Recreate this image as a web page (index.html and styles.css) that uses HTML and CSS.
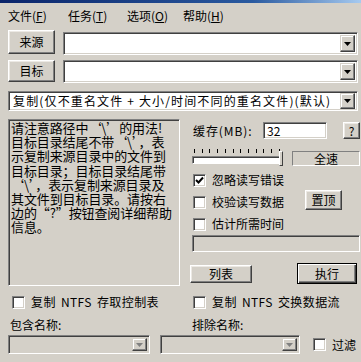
FILE: index.html
```html
<!DOCTYPE html>
<html lang="zh-CN">
<head>
<meta charset="utf-8">
<title>复制</title>
<link rel="stylesheet" href="styles.css">
</head>
<body>
<div class="titlebar"></div>
<nav class="menubar">
  <span class="menu m1">文件(<u>F</u>)</span>
  <span class="menu m2">任务(<u>T</u>)</span>
  <span class="menu m3">选项(<u>O</u>)</span>
  <span class="menu m4">帮助(<u>H</u>)</span>
</nav>
<main class="content">
  <div class="pathrow row-src">
    <button class="btn pathbtn btn-src">来源</button>
    <div class="combo sunken pathcombo combo-src">
      <span class="combo-text"></span>
      <span class="dd"><svg width="7" height="4" viewBox="0 0 7 4"><polygon points="0,0 7,0 3.5,4" fill="#000"/></svg></span>
    </div>
  </div>
  <div class="pathrow row-dst">
    <button class="btn pathbtn btn-dst">目标</button>
    <div class="combo sunken pathcombo combo-dst">
      <span class="combo-text"></span>
      <span class="dd"><svg width="7" height="4" viewBox="0 0 7 4"><polygon points="0,0 7,0 3.5,4" fill="#000"/></svg></span>
    </div>
  </div>
  <div class="combo sunken modecombo">
    <span class="combo-text mode-text">复制(仅不重名文件 + 大小/时间不同的重名文件)(默认)</span>
    <span class="dd"><svg width="7" height="4" viewBox="0 0 7 4"><polygon points="0,0 7,0 3.5,4" fill="#000"/></svg></span>
  </div>

  <div class="mainarea">
    <div class="note sunken">
      <div>请注意路径中‘\’的用法!</div>
      <div>目标目录结尾不带‘\’，表</div>
      <div>示复制来源目录中的文件到</div>
      <div>目标目录；目标目录结尾带</div>
      <div>‘\’，表示复制来源目录及</div>
      <div>其文件到目标目录。请按右</div>
      <div>边的“?”按钮查阅详细帮助</div>
      <div>信息。</div>
    </div>

    <div class="side">
      <div class="cacherow">
        <span class="cachelabel">缓存(MB):</span>
        <div class="field sunken">32</div>
        <button class="btn helpbtn">?</button>
      </div>
      <div class="speedrow">
        <div class="slider">
          <div class="ticks">
            <i></i><i></i><i></i><i></i><i></i><i></i><i></i><i></i><i></i><i></i><i></i><i></i>
          </div>
          <div class="track"><span class="thumb"></span></div>
        </div>
        <div class="static">全速</div>
      </div>
      <div class="opts">
        <div class="checks">
          <label class="chk"><span class="cb"><svg width="9" height="9" viewBox="0 0 9 9"><polyline points="1,4 3.5,6.5 8,1.5" fill="none" stroke="#000" stroke-width="2"/></svg></span><span>忽略读写错误</span></label>
          <label class="chk"><span class="cb"></span><span>校验读写数据</span></label>
          <label class="chk"><span class="cb"></span><span>估计所需时间</span></label>
        </div>
        <button class="btn topbtn">置顶</button>
      </div>
      <div class="progress sunken"></div>
      <div class="actions">
        <button class="btn listbtn">列表</button>
        <button class="btn runbtn">执行</button>
      </div>
    </div>
  </div>

  <div class="ntfsrow">
    <label class="chk ntfs-left"><span class="cb"></span><span class="ntfs-text">复制 NTFS 存取控制表</span></label>
    <label class="chk ntfs-right"><span class="cb"></span><span class="ntfs-text">复制 NTFS 交换数据流</span></label>
  </div>
  <div class="labelrow">
    <span class="lbl-inc">包含名称:</span>
    <span class="lbl-exc">排除名称:</span>
  </div>
  <div class="filterrow">
    <div class="combo sunken disabled fcombo inc">
      <span class="combo-text"></span>
      <span class="dd"><svg width="7" height="4" viewBox="0 0 7 4"><polygon points="0,0 7,0 3.5,4" fill="#808080"/></svg></span>
    </div>
    <div class="combo sunken disabled fcombo exc">
      <span class="combo-text"></span>
      <span class="dd"><svg width="7" height="4" viewBox="0 0 7 4"><polygon points="0,0 7,0 3.5,4" fill="#808080"/></svg></span>
    </div>
    <label class="chk filterchk"><span class="cb"></span><span>过滤</span></label>
  </div>
</main>
</body>
</html>
```

FILE: styles.css
```css
* { box-sizing: border-box; margin: 0; padding: 0; }
html, body { width: 361px; height: 362px; overflow: hidden; }
body {
  background: #d4d0c8;
  font-family: "Noto Sans CJK SC", "Noto Sans", sans-serif;
  font-size: 12px;
  line-height: 14px;
  color: #000;
}
u { text-decoration: underline; }

.titlebar {
  height: 3px;
  background: linear-gradient(90deg, #0a246a, #2a5aa0 70%, #a6caf0);
}

.menubar {
  display: flex;
  align-items: center;
  height: 22px;
  padding-left: 8px;
  padding-top: 3px;
}
.menu { white-space: nowrap; }
.m1 { width: 60px; }
.m2 { width: 59px; }
.m3 { width: 56px; }

.content { padding-left: 8px; }

/* 3D borders */
.sunken {
  border: 1px solid;
  border-color: #808080 #ffffff #ffffff #808080;
  box-shadow: inset 1px 1px #404040, inset -1px -1px #d4d0c8;
}
.btn {
  font: inherit;
  color: #000;
  background: #d4d0c8;
  border: 1px solid;
  border-color: #ffffff #404040 #404040 #ffffff;
  box-shadow: inset -1px -1px #808080, inset 1px 1px #ece9e4;
  display: flex;
  align-items: center;
  justify-content: center;
}

/* path rows */
.pathrow { display: flex; align-items: flex-start; }
.row-src { margin-top: 5px; }
.row-dst { margin-top: 5px; }
.pathbtn { width: 47px; }
.btn-src { height: 24px; }
.btn-dst { height: 22px; }
.pathcombo { margin-left: 8px; width: 295px; height: 23px; }
.combo-src { margin-top: 2px; }

.combo {
  display: flex;
  align-items: stretch;
  background: #fff;
  padding: 2px;
}
.combo-text { flex: 1; white-space: nowrap; overflow: hidden; display: flex; align-items: center; }
.dd {
  width: 15px;
  background: #d4d0c8;
  border: 1px solid;
  border-color: #d4d0c8 #404040 #404040 #d4d0c8;
  box-shadow: inset -1px -1px #808080, inset 1px 1px #ffffff;
  display: flex;
  align-items: center;
  justify-content: center;
}

.modecombo { margin-top: 8px; width: 350px; height: 20px; padding: 1px 2px 1px 1px; }
.mode-text { padding-left: 3px; letter-spacing: 1.15px; }

/* main area */
.mainarea { display: flex; margin-top: 8px; }
.note {
  width: 172px;
  height: 167px;
  background: #d4d0c8;
  padding: 1px 2px;
  font-size: 13px;
  line-height: 14.2px;
  letter-spacing: -0.1px;
  white-space: nowrap;
  overflow: hidden;
}

.side { width: 171px; margin-left: 10px; display: flex; flex-direction: column; }

.cacherow { display: flex; align-items: center; margin-top: 3px; height: 17px; }
.cachelabel { width: 70px; margin-left: 3px; letter-spacing: 0.9px; }
.field { width: 64px; height: 17px; background: #fff; padding: 1px 3px; line-height: 13px; }
.helpbtn { width: 17px; height: 17px; margin-left: 16px; }

.speedrow { display: flex; margin-top: 8px; height: 20px; }
.slider { width: 89px; margin-left: 2px; display: flex; flex-direction: column; }
.ticks { display: flex; justify-content: space-between; padding: 0 1px 0 2px; height: 5px; margin-top: 2px; }
.ticks i { width: 1px; height: 4px; background: #000; }
.track {
  position: relative;
  margin-top: 2px;
  height: 8px;
  background: #fff;
  border: 1px solid;
  border-color: #808080 #ffffff #ffffff #808080;
  box-shadow: inset 1px 1px #404040;
}
.thumb {
  position: absolute;
  right: -3px;
  top: -6px;
  width: 4px;
  height: 15px;
  background: #d4d0c8;
  border: 1px solid;
  border-color: #ffffff #404040 #404040 #ffffff;
}
.static {
  width: 68px;
  height: 15px;
  margin-left: 11px;
  margin-top: 4px;
  border: 1px solid;
  border-color: #808080 #ffffff #ffffff #808080;
  display: flex;
  align-items: center;
  justify-content: center;
}

.opts { display: flex; margin-top: 2px; }
.checks { width: 115px; display: flex; flex-direction: column; }
.chk { display: flex; align-items: center; height: 22px; white-space: nowrap; }
.checks .chk { padding-left: 3px; }
.cb {
  width: 13px;
  height: 13px;
  flex: none;
  background: #fff;
  border: 1px solid;
  border-color: #808080 #ffffff #ffffff #808080;
  box-shadow: inset 1px 1px #404040, inset -1px -1px #d4d0c8;
  display: flex;
  align-items: center;
  justify-content: center;
  margin-right: 6px;
}
.topbtn { width: 37px; height: 20px; margin-top: 21px; }

.progress { width: 168px; height: 17px; margin-left: 2px; background: #d4d0c8; }

.actions { display: flex; align-items: flex-start; margin-top: 11px; }
.listbtn { width: 62px; height: 18px; margin-top: 2px; }
.runbtn {
  width: 60px;
  height: 21px;
  margin-left: 45px;
  border: 1px solid #000;
  box-shadow: inset 1px 1px #ffffff, inset -1px -1px #404040, inset -2px -2px #808080;
}

/* bottom */
.ntfsrow { display: flex; margin-top: 8px; height: 16px; align-items: center; }
.ntfs-left { width: 182px; padding-left: 4px; height: 16px; }
.ntfs-right { padding-left: 3px; height: 16px; }
.ntfs-text { letter-spacing: 0.4px; word-spacing: 2px; }

.labelrow { display: flex; margin-top: 8px; height: 14px; align-items: center; }
.lbl-inc { width: 184px; padding-left: 2px; }

.filterrow { display: flex; align-items: center; margin-top: 3px; }
.fcombo { height: 19px; padding: 2px; }
.disabled { background: #d4d0c8; }
.inc { width: 142px; }
.exc { width: 140px; margin-left: 10px; }
.filterchk { margin-left: 13px; height: 19px; }
.filterchk .cb { margin-right: 6px; }
```
